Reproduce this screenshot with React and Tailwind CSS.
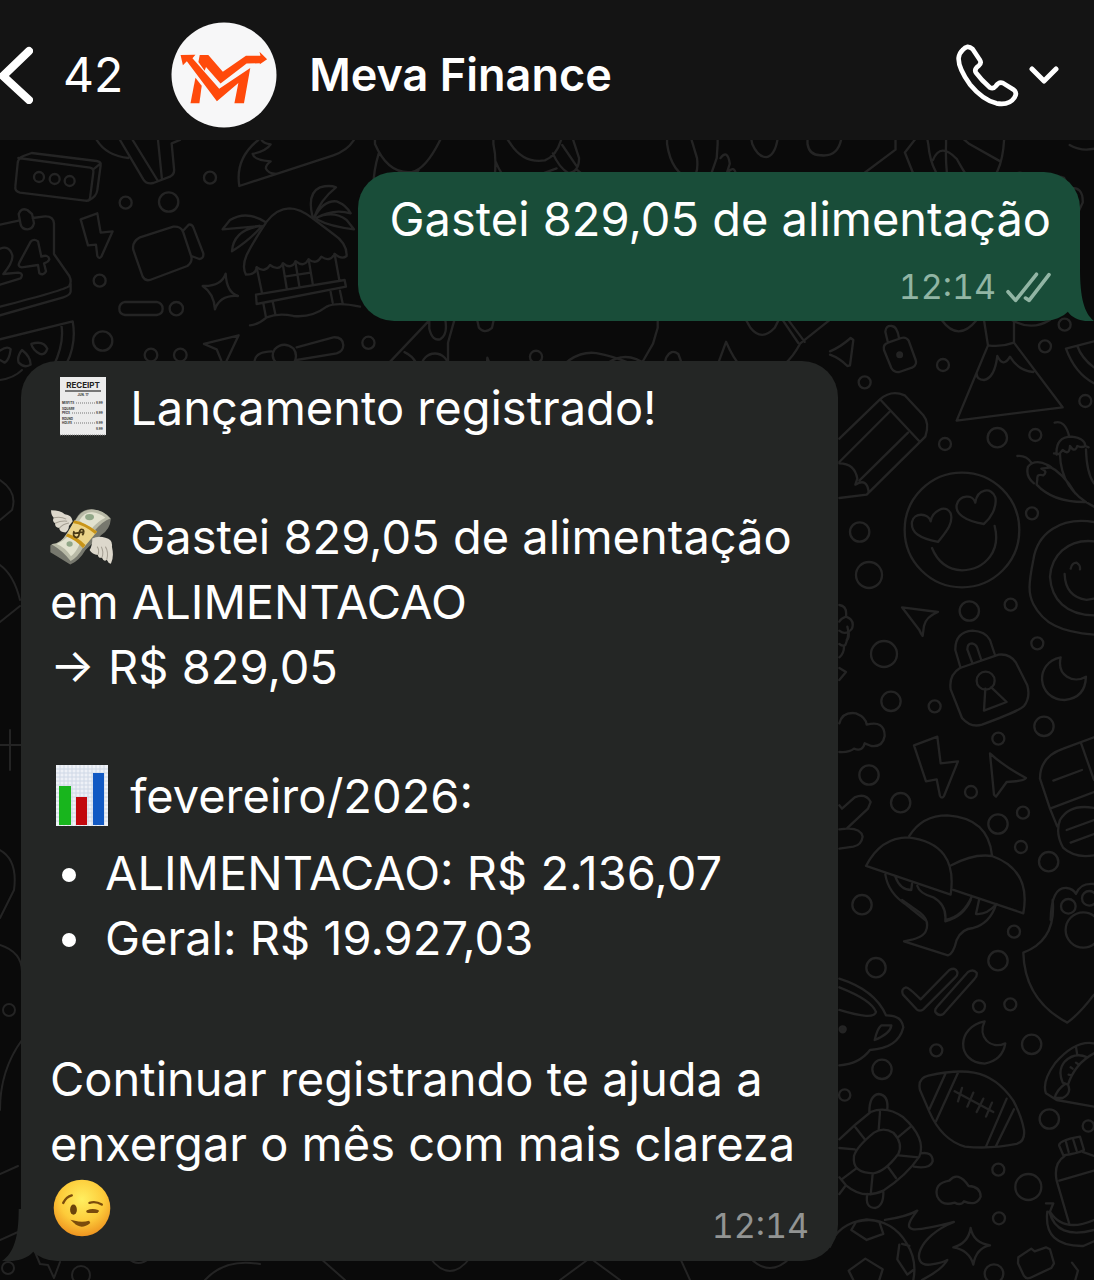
const Dots = ({ items }) => items.map(([x, y, r]) => <circle key={`${x}-${y}`} cx={x} cy={y} r={r} />);

const topDots = [
    [117, 141, 15], [164, 147, 15], [209, 153, 15], [630, 143, 18], [377, 218, 18],
    [506, 216, 29], [299, 452, 18], [529, 536, 20], [308, 633, 29], [453, 675, 19], [541, 675, 19],
];

const upperDots = [
    [339, 135, 18], [645, 79, 18], [704, 14, 18], [104, 187, 18], [766, 243, 18], [345, 372, 18],
    [502, 353, 29], [616, 345, 18], [606, 580, 18], [89, 636, 29], [117, 765, 39], [418, 873, 29], [542, 854, 18],
];

const middleDots = [
    [162, 162, 39], [183, 304, 29], [314, 319, 18], [622, 130, 18], [642, 379, 29], [505, 416, 18],
    [117, 525, 29], [212, 608, 29], [423, 576, 18], [579, 638, 18], [504, 672, 29], [573, 741, 18],
    [656, 785, 29], [96, 914, 29], [715, 919, 22], [778, 895, 22], [467, 242, 27],
];

const lowerDots = [
    [552, 95, 18], [504, 182, 29], [138, 203, 29], [447, 319, 18], [541, 313, 18], [605, 433, 29],
    [319, 451, 18], [156, 508, 29], [44, 585, 17], [658, 657, 29], [775, 678, 17], [505, 809, 18],
    [595, 861, 39], [507, 955, 18], [492, 1121, 28], [760, 90, 53],
];

const Wallpaper = () => (
    <svg
        aria-hidden="true"
        viewBox="0 140 1094 1140"
        preserveAspectRatio="xMinYMin slice"
        className="absolute inset-0 w-full h-full"
        fill="none"
        stroke="#242424"
        strokeWidth="7"
        strokeLinecap="round"
        strokeLinejoin="round"
    >
        {/* top left: keyboard, calendar, camera, beach hut */}
        <g transform="translate(0 130) scale(.3333)">
            <Dots items={topDots} />
            <path d="M55 84L270 113Q282 115 280 128L270 205Q268 214 255 212L60 188Q44 184 46 170L53 100Q54 84 70 78L95 69L290 93Q304 95 302 106L292 180Q290 200 265 212M280 118L302 100" />
            <path d="M290 30Q320 78 385 84M360 30L430 148Q440 164 460 159L510 140Q525 132 522 115L515 40L540 30M398 30L472 150M474 30L486 148" />
            <path d="M775 30Q705 85 718 168L1000 76Q1042 62 1062 30M785 30Q790 40 812 43Q800 62 758 72Q762 90 812 94Q796 106 798 116Q804 130 828 132" />
            <path d="M0 284L56 272M98 264L135 259Q160 258 162 280V372L208 438Q216 455 208 468Q195 480 0 530M212 462V485Q210 496 190 502L0 556M56 252Q64 232 82 240L96 252L102 280Q98 298 82 298Q66 298 62 284Z" />
            <path d="M0 356Q28 345 37 376Q40 396 10 432L55 428Q72 430 62 445L0 464M92 335Q102 325 114 334L124 380Q145 372 148 388Q145 396 132 400L138 424Q130 438 118 430L114 405L65 412Q52 410 58 398Z" />
            <path d="M242 268L292 250L302 308L338 304L304 380Q298 388 292 378L288 344L264 346Z" />
            <path d="M420 322L520 290Q540 288 548 302L574 380Q578 396 562 408L450 450Q436 454 428 440L400 360Q395 336 420 322ZM548 304L566 284Q576 282 580 292L610 370Q612 386 598 387L574 378" />
            <path d="M608 468Q664 470 677 431Q680 488 714 498Q660 494 645 538Q642 490 608 468ZM375 516H470Q488 520 488 536T470 555H375Q358 552 358 536T375 516Z" />
            <path d="M738 434Q725 410 740 375Q760 335 800 275Q830 236 868 235Q900 235 938 265L1000 312Q1042 340 1040 378Q1025 390 1004 372Q990 398 964 380Q950 406 926 388Q912 414 888 394Q872 420 850 400Q835 425 810 405Q795 430 770 412Q768 434 738 434Z" />
            <path d="M770 412L786 488M848 400L860 474M886 394L898 468M926 388L938 460M1004 372L1018 450M854 440L932 428M768 494L1034 450L1038 470L770 522ZM790 520L798 562M818 514L826 552M992 486L998 518M1020 482L1028 520M750 586Q775 584 800 562Q835 548 880 558Q935 564 980 530Q1010 515 1080 530" />
            <path d="M796 276Q740 240 690 270L668 298L780 288Q700 300 696 364Q750 330 786 288M938 262Q920 190 960 172Q990 164 1008 172Q960 210 942 264Q970 210 1010 214Q1040 226 1052 250Q1000 235 948 264Q1000 240 1040 270L1062 298Q990 290 950 268" />
            <path d="M0 628L218 574Q230 640 200 700M184 584Q194 640 160 710M0 662Q22 646 32 658Q28 690 14 698L0 690M66 660Q92 680 92 704Q74 716 56 698Q50 680 66 660ZM94 642Q130 630 142 656Q136 676 120 672Q98 660 94 642Z" />
            <path d="M612 642L716 616L680 692M612 642L650 658L664 692M764 692Q768 665 815 664M890 652L1000 622Q1028 620 1030 645Q1030 664 1010 670L890 690M830 700Q810 680 824 658Q850 632 880 655Q895 675 882 700" />
        </g>

        {/* strip between header and first message */}
        <g transform="translate(360 130) scale(.4681)" strokeWidth="5">
            <path d="M32 20V30Q60 95 110 90Q140 85 172 20M40 50Q25 100 30 140M104 110L125 86M180 94L174 130M285 20V30Q295 75 282 130M290 68Q305 105 328 116M300 126L420 82M315 20L322 30Q350 72 395 65Q420 55 430 20M412 50Q425 80 445 92Q468 90 468 60L455 20M432 32L462 76M462 84Q485 100 498 128M548 126Q570 98 584 126" />
            <path d="M656 20V30Q665 92 708 106Q724 95 720 60L708 20M764 20V30L762 60L742 118M770 60Q785 40 790 72L775 120M786 90Q800 75 803 95L798 125M836 20L838 30Q850 58 868 58Q886 55 892 20M956 20V30Q960 55 985 54Q1020 58 1028 20M1144 20V42L1056 108L1044 128M946 126Q960 108 974 126M1186 20L1164 48L1195 126M1212 20L1214 30Q1220 100 1266 126M1252 20V30Q1250 90 1260 124M1224 64Q1240 25 1275 62C1290 90 1310 124 1330 124Q1372 100 1376 20M1290 20L1302 30L1366 66M1516 32Q1540 46 1568 40M1468 126Q1478 92 1504 102L1516 124Q1545 120 1544 155L1534 176" />
            <circle cx="1410" cy="104" r="13" />
        </g>
        <g transform="translate(360 310) scale(.4681)" strokeWidth="5">
            <path d="M44 154Q44 130 60 115L150 20M202 20L188 70V154M95 90Q128 105 130 154M148 20V40Q155 68 172 62Q188 52 182 20M250 20L254 38Q266 52 282 38L286 20M258 152Q272 130 272 102Q285 140 318 148M406 152Q450 85 505 92Q540 98 580 115M440 152Q470 105 516 124M492 152Q540 85 590 105Q615 118 640 128M550 152Q580 112 628 126M636 20V38L626 72L604 110M650 118L654 102Q665 82 680 94L686 110L690 130L650 118L634 138L640 150M690 130L744 150M752 150L782 68Q815 145 856 140Q910 130 940 72L1005 20M902 20L936 70M914 20L950 68M862 140V152M824 20L834 38Q858 68 886 38L895 20" />
            <circle cx="18" cy="70" r="13" />
            <circle cx="160" cy="122" r="29" />
            <circle cx="376" cy="100" r="13" />
        </g>

        {/* right side, top: padlock, volcano, pencil, heart eyes, chillies */}
        <g transform="translate(830 320) scale(.3333)">
            <Dots items={upperDots} />
            <path d="M0 94Q30 82 62 54L70 60L60 136L52 138Q30 115 0 104M174 68L166 35Q168 15 186 18Q202 20 207 54M174 68Q158 74 162 90L184 144Q192 158 208 156L248 142Q262 134 257 120L236 62Q228 50 214 54Z" />
            <circle cx="209" cy="104" r="7" fill="#242424" />
            <path d="M462 0L474 76L380 302L698 262L552 68V0M474 76Q514 82 552 68M440 160Q440 180 462 180Q494 174 502 108Q520 145 540 110Q565 152 610 156M335 0Q385 68 440 0M545 0Q605 34 660 0M708 86L792 64M708 86Q735 160 792 190M742 78Q755 115 792 142" />
            <path d="M28 356L150 238Q184 208 224 226L280 286Q300 310 286 350L110 524L28 534M150 238L270 366M178 276L28 426M234 338L88 482M28 430Q74 430 82 476L76 494Q112 472 116 518" />
            <circle cx="396" cy="630" r="172" />
            <path d="M324 666C268 654 242 638 246 606C252 575 296 580 302 604C306 575 346 550 362 580C372 612 344 640 324 666ZM462 612C402 602 376 580 380 555C388 524 430 522 436 548C442 505 486 500 496 532C502 562 482 594 462 612ZM306 684Q332 748 396 751Q450 750 480 710Q508 672 494 618" />
            <path d="M674 308Q705 298 718 350M680 404Q676 350 725 350Q765 355 766 378L776 382M672 400L688 402L698 390Q718 408 720 378Q735 400 742 378Q756 384 766 378M690 402Q692 510 792 560M768 388Q770 460 792 490M562 408Q588 405 604 428M612 490Q586 470 594 440Q615 415 655 436L664 442L634 446Q655 454 640 466Q620 460 622 478L620 494Q670 548 768 546M652 436Q700 458 736 520" />
            <path d="M792 606C690 590 622 640 610 720C596 790 594 820 610 852C640 910 690 936 792 944M792 664C710 656 664 710 660 770C664 840 710 886 792 886M704 762Q706 830 770 840L792 836M722 746Q726 728 740 728Q752 736 750 748M216 862L324 876Q288 890 282 918L278 948Q272 940 268 930ZM28 855Q52 858 48 890Q75 900 66 926Q48 948 28 932M48 890Q32 896 28 905M56 936Q58 955 50 960" />
        </g>

        {/* right side, middle: lock, moon, bolt, mushrooms */}
        <g transform="translate(830 600) scale(.3333)">
            <Dots items={middleDots} />
            <path d="M52 80Q60 105 46 135Q38 140 28 132M42 140Q42 160 28 172M28 204L48 216L28 240M392 204L376 150Q375 96 428 92Q466 94 480 120L494 162M426 186L412 148Q412 130 426 130Q438 132 442 144L454 180M390 204L506 164Q540 160 558 188L592 256Q602 292 582 318Q570 332 456 374Q422 384 396 354L362 268Q356 225 390 204ZM466 266L462 332L530 306L484 262" />
            <path d="M692 172C612 188 620 298 704 300Q766 294 768 230C730 252 680 228 692 172ZM28 370Q38 334 78 340Q108 352 110 374Q164 360 164 408Q158 442 124 438L104 430Q98 456 72 446Q58 458 28 456M252 436L322 410L332 490L384 484L342 588Q336 598 330 588L320 538L288 544ZM480 460Q520 498 588 534Q580 544 530 546Q520 560 498 590L492 584Z" />
            <path d="M28 616L36 626L74 592Q108 578 122 606L114 626L50 686L28 688M50 686Q92 684 98 710Q94 736 70 740L28 746" />
            <path d="M238 708Q276 646 352 646Q475 654 486 766M108 798Q152 712 235 712Q385 730 362 884ZM364 796Q430 760 486 768Q604 810 580 940L370 870M166 824Q175 880 230 915L286 960M196 830Q210 870 244 870L246 852M262 858Q268 880 310 892Q350 915 346 960M346 960Q400 950 426 888M448 896L438 942Q470 945 500 912" />
            <path d="M792 412L700 446Q630 470 630 536L660 626L682 680M754 432L792 540M660 626L792 576M670 542L756 510M710 690L792 660M722 728L792 702M792 624Q720 610 690 660Q675 700 700 744Q735 776 792 766M662 960Q664 860 710 864Q730 866 738 882Q750 848 792 852" />
        </g>

        {/* right side, bottom: ticks, football, turtle, taco */}
        <g transform="translate(830 900) scale(.3333)">
            <Dots items={lowerDots} />
            <path d="M216 0L270 38Q300 62 288 92Q280 115 222 124L354 166Q370 162 380 120Q395 86 430 84Q480 70 498 14M346 64Q400 50 422 0M668 0Q680 120 580 158Q584 300 712 368Q750 340 792 284" />
            <path d="M219 284Q212 266 228 262Q236 262 272 298L358 210Q376 200 382 216Q384 225 376 232L280 328Q270 336 260 328ZM320 322L414 216Q430 206 440 218Q442 230 434 236L340 342Q326 350 316 336Q314 328 320 322Z" />
            <path d="M28 236Q135 270 168 346Q215 345 220 382Q205 445 120 450Q88 492 28 496M28 262Q125 300 138 336Q132 362 28 330M134 420Q142 385 154 376H184Q182 400 134 420Z" />
            <circle cx="38" cy="388" r="9" fill="#242424" />
            <path d="M464 364C380 380 376 486 464 491Q518 480 526 430C480 450 442 410 464 364Z" />
            <path d="M270 570Q262 535 295 527Q380 508 432 518Q500 530 550 602Q575 650 582 690Q586 724 560 732Q480 748 405 740Q335 720 298 635ZM346 522L298 628M384 518L318 664M530 596L468 740M552 628L498 738M374 574L490 636M396 564L384 604M430 578L412 620M460 596L440 636M486 608L468 650" />
            <path d="M28 718Q72 675 122 636Q170 616 220 652Q290 715 268 770Q230 826 160 872Q100 900 48 856L28 832M72 768Q80 740 132 698Q160 680 190 698Q220 730 205 762Q165 815 130 820Q65 820 72 768ZM118 636Q118 586 146 582Q176 585 172 628M272 760Q308 754 308 784Q300 808 252 800M112 882Q104 924 136 924Q162 918 160 872M150 636L146 690M242 680L202 714M76 682L106 720M28 744L74 748M206 766L266 772M172 798L198 834M128 822L122 884M78 806L38 836M46 858L28 882" />
            <path d="M792 430Q735 420 675 490Q635 545 648 580L680 600L792 620M738 440L742 466M772 472Q735 455 705 484Q682 510 698 548L714 554Q735 490 792 460M714 554Q726 580 698 594H674Q680 570 705 552M716 524L724 526M722 502L728 506M738 488L744 492M688 738Q682 722 750 710L762 750Q745 760 700 766ZM708 726L716 756M730 720L740 752M704 768Q670 790 680 842L718 972M758 756L792 768M688 842L792 812" />
            <path d="M648 910H670L660 935Q700 1000 792 960M658 935Q680 1020 792 990M652 935Q640 1040 760 1038L792 1024M322 890Q310 850 358 842Q384 812 416 858Q452 860 452 890Q440 920 402 904Q392 918 374 908Q335 920 322 890Z" />
            <path d="M0 1040Q20 970 110 958Q190 962 230 1030Q262 1080 250 1140M64 990L78 966Q120 954 148 966L160 1002L110 1020ZM208 1034L202 1078L232 1124L250 1110M216 1032L238 1038M70 1140L56 1112L106 1076L158 1108L148 1140M165 960Q230 950 262 932C208 1000 240 1000 372 966C260 1010 240 1100 300 1094Q340 1088 352 1080Q335 1110 276 1140" />
            <path d="M422 984Q430 1028 480 1036Q438 1044 430 1094Q418 1050 370 1042Q415 1030 422 984ZM565 1072L604 1046L614 1054L648 1042L660 1048L672 1090L664 1104L600 1134Q588 1138 582 1128L564 1090ZM726 1088L744 1112L736 1140" />
        </g>

        {/* left edge, beside the reply */}
        <g strokeWidth="2">
            <path d="M0 380Q14 378 22 370M0 480Q18 492 12 510L0 520M0 565Q14 575 20 600M0 622L20 606M0 745H22M10 730V770M0 850Q18 860 14 890L0 918M0 945Q22 952 22 972M22 1040Q0 1070 0 1110M0 1174L18 1166M0 1240L18 1232M35 1252L40 1264L48 1265L54 1278L60 1262" />
            <circle cx="9" cy="1010" r="6" />
            <circle cx="8" cy="1268" r="6" />
            <circle cx="81" cy="1275" r="9" />
            <path d="M128 1258Q138 1268 150 1258M205 1280Q225 1258 260 1264M320 1258L345 1280M430 1258Q450 1284 470 1258M560 1280L590 1258L620 1280M680 1258L690 1280M750 1258Q770 1278 790 1258" />
        </g>
    </svg>
);

const Logo = () => (
    <svg viewBox="515 63 319 321" className="w-[106px] h-[106px] shrink-0" role="img" aria-label="Meva Finance">
        <circle cx="674.5" cy="223.5" r="159" fill="#f7f7f8" />
        <g fill="#ff4a0b">
            <path d="M543 163L588 162L579 173L660 265L754 202L735 309H706L718 248L653 303L562 182L550 194Z" />
            <path d="M588 232L607 256L600 309H573Z" />
            <path d="M601 163H627L671 214L741 165H785L782 153L805 176L783 191V188L743 189L664 249L620 199L616 211L597 184Z" />
        </g>
    </svg>
);

const Receipt = () => (
    <svg viewBox="0 0 64 60" className="inline-block w-16 h-[60px] mr-[3px] align-[-11px]" role="img" aria-label="Recibo">
        <path d="M10 1H56V59H10Z" fill="#ececec" />
        <path d="M10 59H56" stroke="#8b8b8b" strokeDasharray="1 1" />
        <text x="33" y="12" textAnchor="middle" fontSize="8" fontWeight="700" fill="#222" fontFamily="Inter, sans-serif">RECEIPT</text>
        <path d="M15 15H51" stroke="#777" strokeWidth="2" />
        <g fontSize="3" fontWeight="700" fill="#333" fontFamily="Inter, sans-serif">
            <text x="33" y="20" textAnchor="middle">JUN. 17</text>
            <text x="12" y="28">MISFITS</text>
            <text x="12" y="34">SQUARE</text>
            <text x="12" y="38">PEGS</text>
            <text x="12" y="44">ROUND</text>
            <text x="12" y="48">HOLES</text>
            <text x="46" y="28">8.99</text>
            <text x="46" y="38">8.99</text>
            <text x="46" y="48">8.99</text>
            <text x="46" y="54">8.99</text>
        </g>
        <path d="M26 27H45M22 37H45M24 47H45" stroke="#777" strokeDasharray="1 1" strokeWidth="1" />
    </svg>
);

const Money = () => (
    <svg viewBox="65 442 186 172" className="inline-block w-16 h-[60px] mr-[3px] align-[-13px]" role="img" aria-label="Dinheiro com asas">
        <path d="M66 552Q94 550 112 520L146 466Q162 446 188 447Q220 450 242 474Q240 505 214 522L168 566Q150 598 124 608Q104 595 66 572Z" fill="#77786e" />
        <path d="M68 548Q95 550 114 518L148 466Q165 446 190 448Q220 450 240 474Q218 482 196 508L162 558Q145 588 125 598Q103 568 68 548Z" fill="#b9baa7" />
        <path d="M84 548Q106 540 122 520L154 542Q142 572 126 584Q110 558 84 548ZM150 480Q166 454 188 456Q208 458 226 472Q204 482 184 506Z" fill="#e2e2cf" />
        <ellipse cx="180" cy="470" rx="13" ry="9" fill="#91a788" />
        <ellipse cx="122" cy="548" rx="9" ry="8" fill="#91a788" />
        <path d="M136 480Q166 485 202 512L162 560Q140 536 112 526Z" fill="#ecd48a" />
        <path d="M136 480Q166 485 202 512L196 519Q164 492 131 487ZM116 518Q145 528 168 551L161 561Q140 536 111 526Z" fill="#c99418" />
        <path d="M135 511Q129 526 142 530Q150 529 150 516Q152 502 161 507Q166 513 159 523M132 518L165 513" fill="none" stroke="#4b3a15" strokeWidth="5" />
        <path d="M131 482Q128 464 108 462Q96 450 68 450Q68 464 76 472Q70 482 80 488Q78 500 92 502Q92 514 110 515Q120 508 120 496Z" fill="#ddd8cc" />
        <path d="M76 472Q98 468 112 476M80 488Q96 480 115 482M92 502Q102 490 120 487" fill="none" stroke="#a59f93" strokeWidth="3" />
        <path d="M188 532Q205 524 226 530Q248 534 245 556Q252 586 242 606Q234 604 230 594Q222 602 216 588Q206 590 204 580Q188 580 180 566Q188 554 188 532Z" fill="#ddd8cc" />
        <path d="M230 594Q236 572 226 556M216 588Q222 570 214 556M204 580Q210 566 202 556" fill="none" stroke="#a59f93" strokeWidth="3" />
    </svg>
);

const Chart = () => (
    <svg viewBox="0 0 64 62" className="inline-block w-16 h-[62px] mr-[3px] align-[-13px]" role="img" aria-label="Gráfico">
        <path d="M6 1H58V62H6Z" fill="#eef1f7" />
        <path d="M6 5H58M6 9H58M6 13H58M6 17H58M6 21H58M6 25H58M6 29H58M6 33H58M6 37H58M6 41H58M6 45H58M6 49H58M6 53H58M6 57H58M10 1V62M14 1V62M18 1V62M22 1V62M26 1V62M30 1V62M34 1V62M38 1V62M42 1V62M46 1V62M50 1V62M54 1V62" stroke="#cfd8e6" strokeWidth="1" />
        <path d="M9 22H21V61H9Z" fill="#18b51d" />
        <path d="M26 33H37V61H26Z" fill="#c2080d" />
        <path d="M43 9H54V61H43Z" fill="#1259c3" />
    </svg>
);

const Wink = () => (
    <svg viewBox="160 55 186 176" className="w-16 h-[60px]" role="img" aria-label="Piscadela">
        <defs>
            <radialGradient id="wink" cx="50%" cy="35%" r="65%">
                <stop offset="0" stopColor="#ffef60" />
                <stop offset=".6" stopColor="#fdcb3a" />
                <stop offset="1" stopColor="#ee9420" />
            </radialGradient>
        </defs>
        <circle cx="253" cy="143" r="83" fill="url(#wink)" />
        <ellipse cx="228" cy="148" rx="10" ry="15" fill="#6b430b" />
        <g fill="none" stroke="#7a4b0c" strokeWidth="7" strokeLinecap="round">
            <path d="M198 128Q207 110 223 106M275 128Q293 122 311 133M269 153Q283 146 299 152M271 154Q283 154 297 154" />
            <path d="M231 184Q251 204 275 184Q253 190 231 184Z" fill="#7a4b0c" />
        </g>
    </svg>
);

const Tail = ({ className }) => (
    <svg aria-hidden="true" viewBox="0 0 26 52" preserveAspectRatio="none" className={`absolute bottom-0 h-[52px] ${className}`}>
        <path d="M12 0C12 28 16 44 26 52C16 53 6 51 0 43V0Z" fill="currentColor" />
    </svg>
);

const Header = () => (
    <header className="flex items-center h-[140px] pt-[10px] pr-[35px] bg-[#141414] text-white">
        <button type="button" aria-label="Voltar, 42 conversas" className="flex items-center gap-[30px] text-5xl">
            <svg viewBox="0 0 33 58" className="w-[33px] h-[58px]" fill="none" stroke="currentColor" strokeWidth="8" strokeLinecap="round" strokeLinejoin="round">
                <path d="M29 5L3 30L29 54" />
            </svg>
            42
        </button>
        <div className="flex items-center gap-8 ml-12">
            <Logo />
            <h1 className="text-[45px] font-semibold whitespace-nowrap">Meva Finance</h1>
        </div>
        <button type="button" aria-label="Ligar" className="flex items-center gap-[10px] ml-auto">
            <svg viewBox="50 72 190 194" className="w-[63px] h-[65px]" fill="none" stroke="currentColor" strokeWidth="14" strokeLinejoin="round">
                <path d="M70 92Q84 75 100 89L122 122Q128 132 118 140Q104 150 110 160Q126 182 152 205Q162 211 170 201Q180 186 192 192L224 212Q236 222 226 236Q210 260 172 253Q130 242 92 196Q56 145 58 116Q60 101 70 92Z" />
            </svg>
            <svg viewBox="0 0 30 20" className="w-[30px] h-5" fill="none" stroke="currentColor" strokeWidth="5" strokeLinecap="round" strokeLinejoin="round">
                <path d="M3 4L15 16L27 4" />
            </svg>
        </button>
    </header>
);

const totals = ['ALIMENTACAO: R$ 2.136,07', 'Geral: R$ 19.927,03'];

const App = () => {
    return (
        <div className="flex flex-col min-h-screen bg-[#0a0a0a] font-['Inter',sans-serif] text-white overflow-hidden">
            <Header />

            <main className="relative flex flex-col flex-1 gap-10 pt-8 pb-[19px] text-[47px] leading-[65px]">
                <Wallpaper />

                <article className="relative self-end mr-[14px] pl-8 pr-[29px] py-[14px] rounded-[36px] bg-[#194d39]">
                    <p>Gastei 829,05 de alimentação</p>
                    <div className="flex items-center justify-end gap-[10px] mt-4 text-[34px] leading-10 text-[#91b5a4]">
                        <time className="tabular-nums">12:14</time>
                        <svg viewBox="444 91 136 92" className="w-[45px] h-[31px]" fill="none" stroke="currentColor" strokeWidth="11" strokeLinecap="round" strokeLinejoin="round" role="img" aria-label="Entregue">
                            <path d="M450 150L473 176L536 97M503 169L514 176L574 98" />
                        </svg>
                    </div>
                    <Tail className="-right-[14px] w-[26px] text-[#194d39]" />
                </article>

                <article className="relative max-w-[817px] ml-[21px] mr-[21px] px-[29px] pt-[14px] pb-[15px] rounded-[36px] bg-[#242625]">
                    <p><Receipt /> Lançamento registrado!</p>
                    <p className="mt-16">
                        <Money /> Gastei 829,05 de alimentação em ALIMENTACAO
                    </p>
                    <p>→ R$ 829,05</p>
                    <p className="mt-16"><Chart /> fevereiro/2026:</p>
                    <ul className="mt-3">
                        {totals.map((total) => (
                            <li key={total} className="flex items-center">
                                <span className="w-[14px] h-[14px] mt-1 ml-3 mr-[29px] rounded-full bg-white"></span>
                                {total}
                            </li>
                        ))}
                    </ul>
                    <p className="mt-[76px]">Continuar registrando te ajuda a enxergar o mês com mais clareza</p>
                    <div className="flex items-end justify-between h-[70px]">
                        <div className="pb-2"><Wink /></div>
                        <time className="text-[34px] leading-10 tabular-nums text-[#929493]">12:14</time>
                    </div>
                    <Tail className="-left-[19px] w-[31px] -scale-x-100 text-[#242625]" />
                </article>
            </main>
        </div>
    );
};

export default App;
